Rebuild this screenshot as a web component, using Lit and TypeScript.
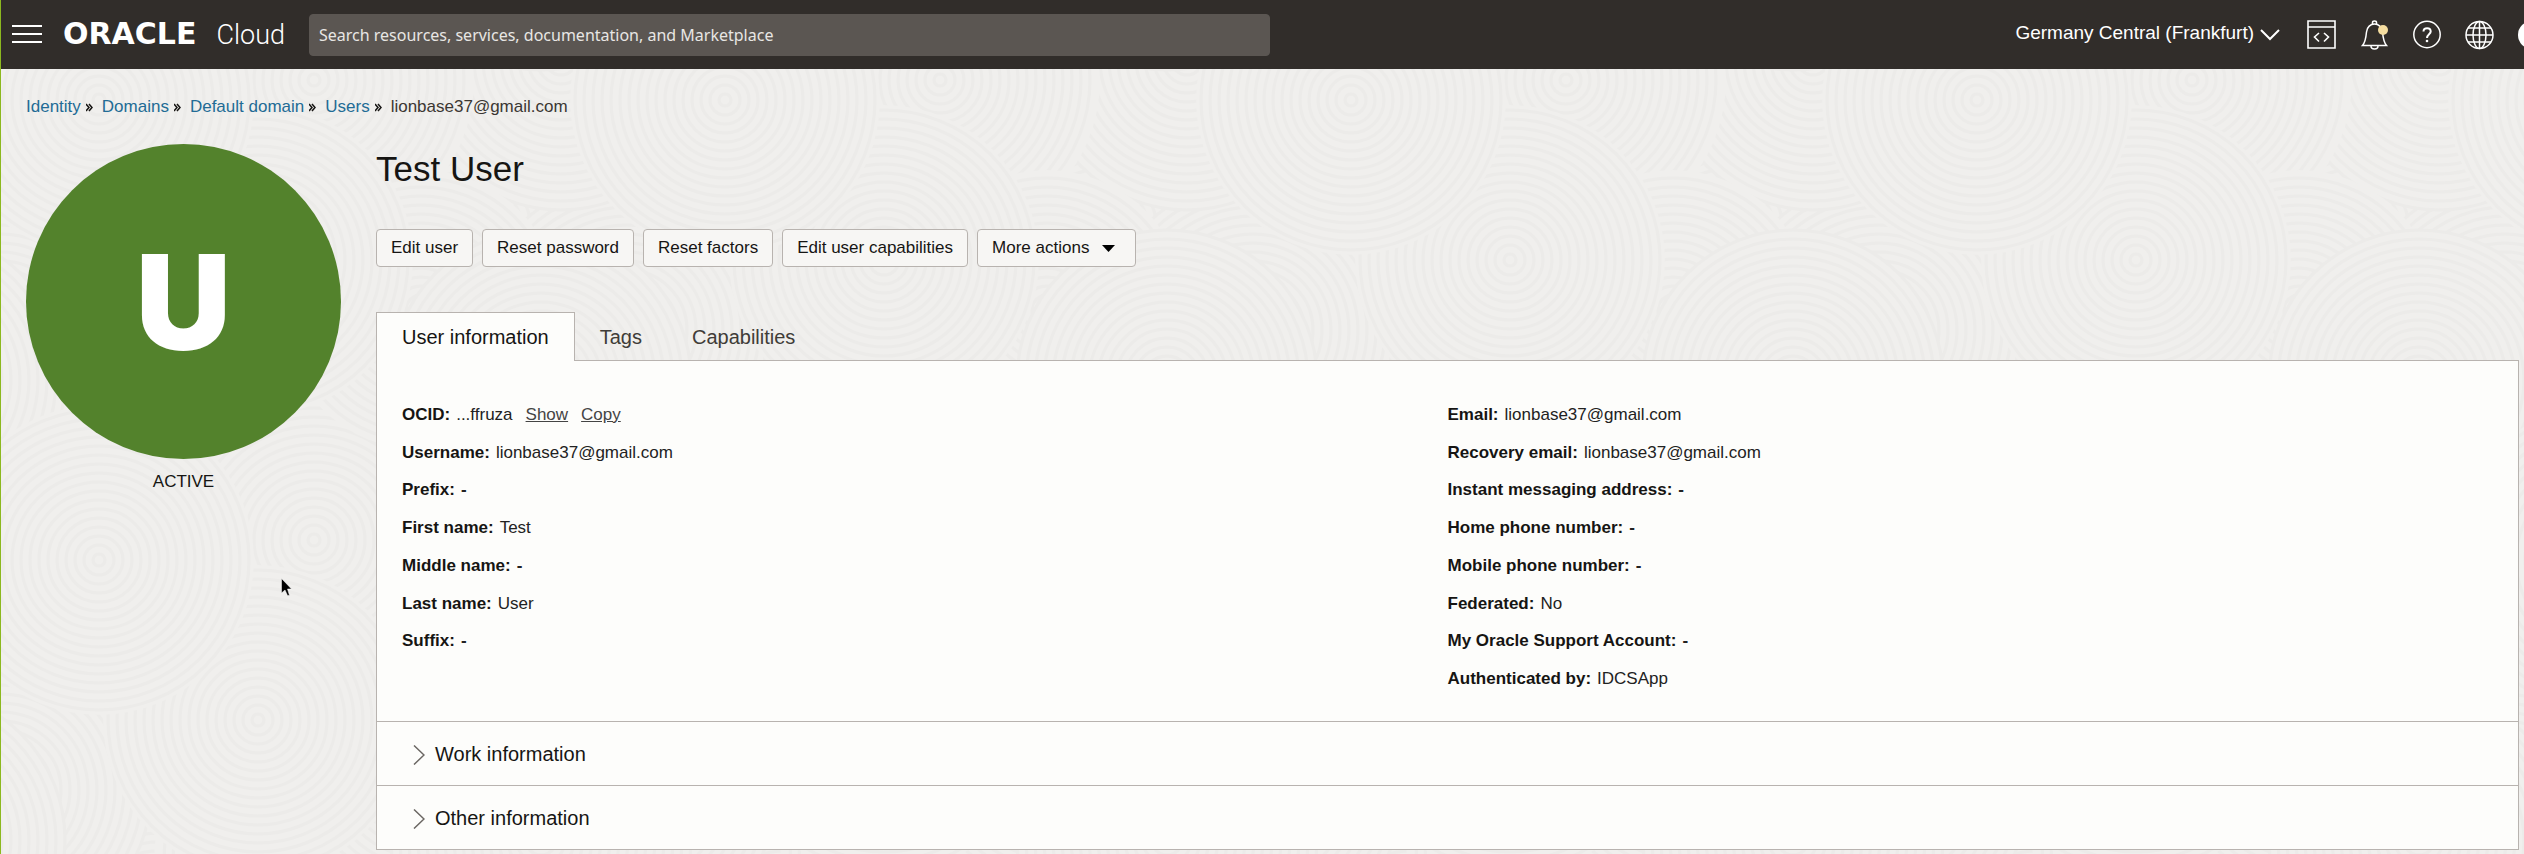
import { LitElement, html, svg, css, nothing } from "lit";
import { customElement, property } from "lit/decorators.js";

interface Detail {
  label: string;
  value?: string;
  actions?: string[];
}

const CRUMBS = ["Identity", "Domains", "Default domain", "Users"];
const ACTIONS = ["Edit user", "Reset password", "Reset factors", "Edit user capabilities"];
const TABS = ["User information", "Tags", "Capabilities"];
const SECTIONS = ["Work information", "Other information"];

const LEFT: Detail[] = [
  { label: "OCID", value: "...ffruza", actions: ["Show", "Copy"] },
  { label: "Username", value: "lionbase37@gmail.com" },
  { label: "Prefix" },
  { label: "First name", value: "Test" },
  { label: "Middle name" },
  { label: "Last name", value: "User" },
  { label: "Suffix" },
];

const RIGHT: Detail[] = [
  { label: "Email", value: "lionbase37@gmail.com" },
  { label: "Recovery email", value: "lionbase37@gmail.com" },
  { label: "Instant messaging address" },
  { label: "Home phone number" },
  { label: "Mobile phone number" },
  { label: "Federated", value: "No" },
  { label: "My Oracle Support Account" },
  { label: "Authenticated by", value: "IDCSApp" },
];

/* Overlapping ringed discs: [cx, cy, radius] inside one 626 x 460 tile. */
const DISCS: number[][] = [
  [470, 230, 160], [157, 0, 160], [0, 330, 150], [313, 400, 160],
  [560, 60, 150], [313, 80, 160], [420, 310, 140], [257, 260, 155],
  [540, 380, 150], [98, 100, 155],
];
const RINGS = Array.from({ length: 17 }, (_, i) => i * 9 + 6);

@customElement("ripple-backdrop")
export class RippleBackdrop extends LitElement {
  static styles = css`
    :host { display: block; }
    .art { display: block; width: 100%; height: 100%; }
  `;

  private disc(cx: number, cy: number, r: number) {
    return svg`
      <circle cx=${cx} cy=${cy} r=${r} fill="#f0efed"></circle>
      ${RINGS.filter((k) => k <= r).map(
        (k) => svg`<circle cx=${cx} cy=${cy} r=${k} fill="none" stroke="#ecebe9" stroke-width="3"></circle>`
      )}`;
  }

  render() {
    return html`<svg class="art" aria-hidden="true">
      <defs>
        <pattern id="ripples" width="626" height="460" patternUnits="userSpaceOnUse">
          ${DISCS.map(([x, y, r]) =>
            [-626, 0, 626].map((dx) => [-460, 0, 460].map((dy) => this.disc(x + dx, y + dy, r)))
          )}
        </pattern>
      </defs>
      <rect width="100%" height="100%" fill="url(#ripples)"></rect>
    </svg>`;
  }
}

@customElement("cloud-header")
export class CloudHeader extends LitElement {
  static styles = css`
    :host {
      display: flex;
      align-items: center;
      height: 69px;
      box-sizing: border-box;
      padding-left: 11px;
      overflow: hidden;
      background: #312d2a;
      color: #fff;
      font-family: "Liberation Sans", Arial, sans-serif;
    }
    button { padding: 0; border: 0; background: none; color: inherit; font: inherit; cursor: pointer; }
    svg { display: block; fill: none; stroke: currentColor; }
    .menu { flex: none; }
    .brand { display: flex; align-items: baseline; justify-content: space-between; flex: none; width: 222px; margin: 0 24px 0 21px; color: inherit; text-decoration: none; line-height: 32px; }
    .oracle { font: bold 30px/32px "DejaVu Sans", sans-serif; }
    .cloud { font: 300 27px/32px Roboto, sans-serif; }
    .search {
      flex: 0 1 961px;
      min-width: 0;
      height: 42px;
      box-sizing: border-box;
      padding: 0 9px;
      border: 1px solid #5b5652;
      border-radius: 4px;
      background: #5b5652;
      color: #fff;
      font: 16px "Noto Sans", sans-serif;
    }
    .search::placeholder { color: #e8e6e4; opacity: 1; }
    .tools { display: flex; align-items: center; flex: none; gap: 24px; margin-left: auto; }
    .region { display: flex; align-items: center; gap: 6px; margin-right: 3px; font-size: 19px; line-height: 22px; }
    .region-name { padding-bottom: 4px; }
    .profile { flex: none; width: 28px; height: 28px; margin-right: -22px; border-radius: 50%; background: #fff; }
  `;

  render() {
    return html`
      <button class="menu" aria-label="Navigation menu">
        <svg width="30" height="20" stroke-width="2"><path d="M0 1H30M0 9H30M0 17H30"></path></svg>
      </button>
      <a class="brand" href="#"><span class="oracle">ORACLE</span><span class="cloud">Cloud</span></a>
      <input class="search" type="search" aria-label="Search"
        placeholder="Search resources, services, documentation, and Marketplace" />
      <div class="tools">
        <button class="region">
          <span class="region-name">Germany Central (Frankfurt)</span>
          <svg width="20" height="12" stroke-width="2"><path d="M1 1L10 10L19 1"></path></svg>
        </button>
        <button aria-label="Developer tools">
          <svg width="30" height="30" stroke-width="1.6">
            <path d="M1 1H28V28H1ZM1 7H28M12 13L7.500 17L12 21.500M17 13L21.500 17L17 21.500"></path>
          </svg>
        </button>
        <button aria-label="Announcements">
          <svg width="28" height="30" stroke-width="1.500">
            <path d="M1.500 25.500H25.500C22.500 22 22 17.500 21.500 12C21 7 17.500 4 13.500 4S6 7 5.500 12C5 17.500 4.500 22 1.500 25.500ZM11.500 4V2.500C11.500 .5 15.500 .5 15.500 2.500V4M10 26C10 30 17 30 17 26"></path>
            <circle cx="22" cy="10" r="5" fill="#f5dda0" stroke="none"></circle>
          </svg>
        </button>
        <button aria-label="Help">
          <svg width="28" height="30" stroke-width="1.500">
            <circle cx="14" cy="14.500" r="13.200"></circle>
            <path d="M10.500 11.500C10.500 7 17.700 7 17.700 11.500C17.700 14 14 14.500 14 18" stroke-width="2"></path>
            <circle cx="14" cy="21" r="1.300" fill="currentColor" stroke="none"></circle>
          </svg>
        </button>
        <button aria-label="Language">
          <svg width="29" height="30" stroke-width="1.500">
            <circle cx="14.500" cy="15" r="13.500"></circle>
            <ellipse cx="14.500" cy="15" rx="6.500" ry="13.500"></ellipse>
            <path d="M14.500 1.500V28.500M1 15H28M3 8H26M3 22H26"></path>
          </svg>
        </button>
        <button class="profile" aria-label="Profile"></button>
      </div>
    `;
  }
}

@customElement("detail-list")
export class DetailList extends LitElement {
  @property({ attribute: false }) items: Detail[] = [];

  static styles = css`
    :host { display: block; }
    .list { display: grid; grid-template-rows: repeat(8, 1fr); min-height: 302px; margin: 0; }
    .row { display: flex; align-items: center; gap: 6px; }
    .term { font-weight: bold; color: #161513; }
    .value { margin: 0; color: #222; }
    .empty { font-weight: bold; }
    .action { margin-left: 7px; padding: 0; border: 0; background: none; font: inherit; color: #444; text-decoration: underline; cursor: pointer; }
  `;

  render() {
    return html`<dl class="list">
      ${this.items.map(
        (d) => html`<div class="row">
          <dt class="term">${d.label}:</dt>
          <dd class="value ${d.value ? "" : "empty"}">${d.value ?? "-"}</dd>
          ${d.actions?.map((a) => html`<button class="action">${a}</button>`) ?? nothing}
        </div>`
      )}
    </dl>`;
  }
}

@customElement("app-root")
export class AppRoot extends LitElement {
  static styles = css`
    :host {
      display: flow-root;
      position: relative;
      min-height: 100vh;
      box-sizing: border-box;
      border-left: 1px solid #8cb81f;
      background: #f0efed;
      color: #161513;
      font: 17px/22px "Liberation Sans", Arial, sans-serif;
    }
    .backdrop { position: absolute; inset: 0; }
    .page { position: relative; }
    .crumbs { display: flex; gap: 9px; margin: 0; padding: 27px 25px 26px; list-style: none; }
    .crumb { display: flex; align-items: center; gap: 5px; color: #3b3733; }
    .crumb a { color: #226b95; text-decoration: none; }
    .columns { display: flex; align-items: flex-start; gap: 35px; padding: 0 5px 4px 25px; }
    .status { flex: none; width: 315px; text-align: center; }
    .avatar {
      display: grid;
      place-items: center;
      aspect-ratio: 1;
      margin-bottom: 12px;
      border-radius: 50%;
      background: #53822c;
      color: #fff;
      font: 900 132px/140px Inter, sans-serif;
    }
    .main { flex: 1; min-width: 0; }
    .title { margin: 4px 0 40px; font-weight: normal; font-size: 35px; line-height: 41px; }
    .actions { display: flex; flex-wrap: wrap; gap: 9px; margin-bottom: 45px; }
    .action {
      display: flex;
      align-items: center;
      gap: 13px;
      height: 38px;
      box-sizing: border-box;
      padding: 0 14px;
      border: 1px solid #b8b3af;
      border-radius: 4px;
      background: #f7f6f4;
      color: inherit;
      font: inherit;
      cursor: pointer;
    }
    .more { padding-right: 20px; }
    .tabs { display: flex; position: relative; margin-bottom: -1px; }
    .tab { height: 49px; padding: 0 24px; border: 1px solid transparent; border-bottom: 0; background: none; color: #403c38; font: 20px/22px "Liberation Sans", Arial, sans-serif; cursor: pointer; }
    .tab.active { padding: 0 25px; border-color: #b8b3af; background: #fdfdfb; color: #161513; }
    .panel { border: 1px solid #b8b3af; background: #fdfdfb; }
    .details { display: grid; grid-template-columns: 1fr 1fr; padding: 35px 25px 23px; }
    .section { display: flex; align-items: center; gap: 10px; width: 100%; height: 64px; padding: 0 36px; border: 0; border-top: 1px solid #b8b3af; background: none; color: inherit; font: 20px/22px "Liberation Sans", Arial, sans-serif; cursor: pointer; }
    .chevron { margin-top: 2px; }
    .pointer { position: absolute; left: 280px; top: 578px; }
  `;

  render() {
    return html`
      <ripple-backdrop class="backdrop"></ripple-backdrop>
      <div class="page">
        <cloud-header></cloud-header>
        <nav aria-label="Breadcrumb">
          <ol class="crumbs">
            ${CRUMBS.map(
              (c) => html`<li class="crumb">
                <a href="#">${c}</a>
                <svg width="7" height="9" fill="none" stroke="#161513" stroke-width="1.500" aria-hidden="true">
                  <path d="M0 1L3 4.500L0 8M3 1L6 4.500L3 8"></path>
                </svg>
              </li>`
            )}
            <li class="crumb" aria-current="page">lionbase37@gmail.com</li>
          </ol>
        </nav>
        <div class="columns">
          <aside class="status">
            <div class="avatar">U</div>
            ACTIVE
          </aside>
          <main class="main">
            <h1 class="title">Test User</h1>
            <div class="actions">
              ${ACTIONS.map((a) => html`<button class="action">${a}</button>`)}
              <button class="action more">
                More actions
                <svg width="13" height="7" aria-hidden="true"><path d="M0 0H13L6.500 7Z"></path></svg>
              </button>
            </div>
            <div class="tabs" role="tablist">
              ${TABS.map(
                (t, i) => html`<button class="tab ${i === 0 ? "active" : ""}" role="tab" aria-selected=${i === 0}>${t}</button>`
              )}
            </div>
            <div class="panel">
              <div class="details">
                <detail-list .items=${LEFT}></detail-list>
                <detail-list .items=${RIGHT}></detail-list>
              </div>
              ${SECTIONS.map(
                (s) => html`<button class="section" aria-expanded="false">
                  <svg class="chevron" width="12" height="20" fill="none" stroke="#6b6763" stroke-width="1.500" aria-hidden="true">
                    <path d="M1 .5L11 10L1 19.500"></path>
                  </svg>
                  ${s}
                </button>`
              )}
            </div>
          </main>
        </div>
      </div>
      <svg class="pointer" width="12" height="19" aria-hidden="true">
        <path d="M.5 .5V15L4 12L6.500 17.500H8.500L6.500 11H10.500Z" fill="#000" stroke="#fff" stroke-width=".5"></path>
      </svg>
    `;
  }
}
